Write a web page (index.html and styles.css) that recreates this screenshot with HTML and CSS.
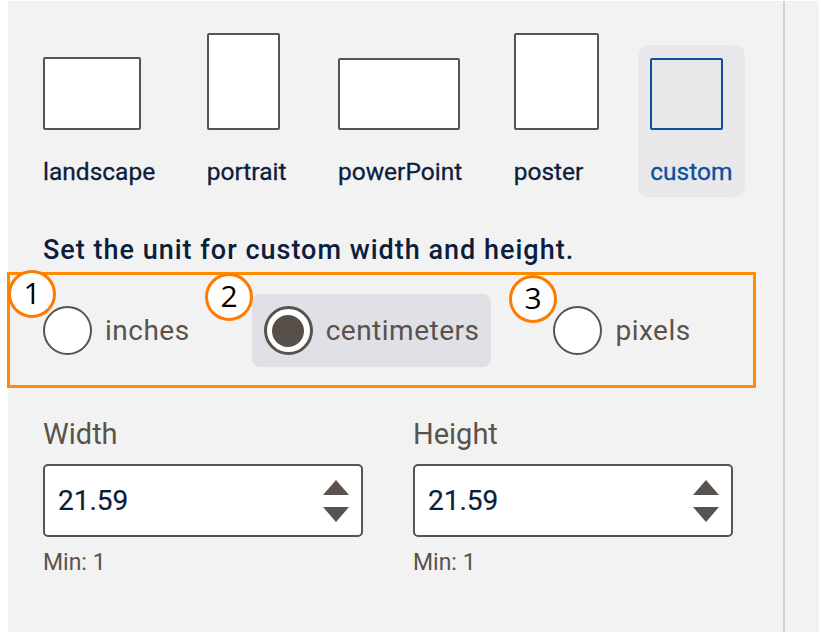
FILE: index.html
```html
<!DOCTYPE html>
<html lang="en">
<head>
<meta charset="utf-8">
<title>Page size</title>
<link rel="stylesheet" href="styles.css">
</head>
<body>
<div class="panel">
  <div class="main">
    <div class="sizes">
      <div class="size">
        <div class="thumb landscape"></div>
        <div class="size-label">landscape</div>
      </div>
      <div class="size">
        <div class="thumb portrait"></div>
        <div class="size-label">portrait</div>
      </div>
      <div class="size">
        <div class="thumb powerpoint"></div>
        <div class="size-label">powerPoint</div>
      </div>
      <div class="size">
        <div class="thumb poster"></div>
        <div class="size-label">poster</div>
      </div>
      <div class="size selected">
        <div class="thumb custom"></div>
        <div class="size-label">custom</div>
      </div>
    </div>

    <div class="heading">Set the unit for custom width and height.</div>

    <div class="units">
      <div class="unit">
        <span class="radio"></span>
        <span class="unit-label">inches</span>
      </div>
      <div class="unit checked">
        <span class="radio"><span class="dot"></span></span>
        <span class="unit-label">centimeters</span>
      </div>
      <div class="unit">
        <span class="radio"></span>
        <span class="unit-label">pixels</span>
      </div>
      <span class="badge b1">1</span>
      <span class="badge b2">2</span>
      <span class="badge b3">3</span>
    </div>

    <div class="fields">
      <div class="field">
        <div class="field-label">Width</div>
        <div class="input">
          <span class="value">21.59</span>
          <svg class="spin" width="26" height="42" viewBox="0 0 26 42">
            <polygon points="13,0 26,15 0,15" fill="#5a524c"/>
            <polygon points="0,27 26,27 13,42" fill="#5a524c"/>
          </svg>
        </div>
        <div class="hint">Min: 1</div>
      </div>
      <div class="field">
        <div class="field-label">Height</div>
        <div class="input">
          <span class="value">21.59</span>
          <svg class="spin" width="26" height="42" viewBox="0 0 26 42">
            <polygon points="13,0 26,15 0,15" fill="#5a524c"/>
            <polygon points="0,27 26,27 13,42" fill="#5a524c"/>
          </svg>
        </div>
        <div class="hint">Min: 1</div>
      </div>
    </div>
  </div>
  <div class="divider"></div>
  <div class="side"></div>
</div>
</body>
</html>
```

FILE: styles.css
```css
html, body {
  margin: 0;
  padding: 0;
  background: #ffffff;
}

body {
  font-family: Roboto, "Liberation Sans", Arial, sans-serif;
}

.panel {
  margin: 1px 0 0 8px;
  width: 811px;
  height: 631px;
  background: #f2f2f2;
  display: flex;
}

.main {
  flex: 1;
  padding: 19px 0 0 35px;
}

.divider {
  width: 2px;
  background: #d5d0cc;
}

.side {
  width: 34px;
}

/* size thumbnails */
.sizes {
  display: flex;
  align-items: flex-end;
  gap: 26.5px;
  margin-left: -12px;
}

.size {
  display: flex;
  flex-direction: column;
  align-items: flex-start;
  padding: 13px 13px 11px 12px;
  border-radius: 10px;
}

.size.selected {
  background: #e8e8ea;
}

.thumb {
  box-sizing: border-box;
  background: #ffffff;
  border: 2px solid #5a524c;
  border-radius: 2px;
}

.landscape { width: 98px; height: 73px; }
.portrait { width: 73px; height: 97px; }
.powerpoint { width: 122px; height: 72px; }
.poster { width: 85px; height: 97px; }
.custom {
  width: 73px;
  height: 72px;
  background: transparent;
  border-color: #0d4ea0;
}

.size-label {
  margin-top: 27px;
  font-size: 24.5px;
  font-weight: 400;
  line-height: 29px;
  color: #0c1e3c;
  -webkit-text-stroke: 0.3px #0c1e3c;
}

.selected .size-label {
  color: #0d4e9f;
  -webkit-text-stroke: 0.3px #0d4e9f;
}

/* heading */
.heading {
  margin-top: 39px;
  font-size: 27px;
  font-weight: 500;
  letter-spacing: 1px;
  line-height: 29px;
  color: #0c1e3c;
}

/* unit radios */
.units {
  position: relative;
  box-sizing: border-box;
  width: 749px;
  margin: 7px 0 0 -36px;
  padding: 19px 21px 18px;
  border: 3px solid #ff8c00;
  display: flex;
  gap: 50px;
}

.unit {
  display: flex;
  align-items: center;
  gap: 13px;
  padding: 12px;
  border-radius: 8px;
}

.unit.checked {
  background: #dfe1e6;
}

.radio {
  box-sizing: border-box;
  width: 49px;
  height: 49px;
  border-radius: 50%;
  border: 2px solid #5a524c;
  background: #ffffff;
  display: flex;
  align-items: center;
  justify-content: center;
}

.checked .radio {
  border-width: 3px;
}

.dot {
  width: 32px;
  height: 32px;
  border-radius: 50%;
  background: #574f49;
}

.unit-label {
  font-size: 28px;
  letter-spacing: 0.5px;
  line-height: 34px;
  color: #5a524c;
}

.badge {
  position: absolute;
  box-sizing: border-box;
  width: 48px;
  height: 48px;
  border-radius: 50%;
  border: 3px solid #ff7a00;
  background: #ffffff;
  color: #000000;
  font-family: "Open Sans", "Liberation Sans", sans-serif;
  font-size: 30px;
  line-height: 40px;
  text-align: center;
}

.b1 { left: -2px; top: -5px; }
.b2 { left: 195px; top: -2px; }
.b3 { left: 499px; top: 0; }

/* fields */
.fields {
  margin-top: 29px;
  display: flex;
  gap: 50px;
}

.field {
  width: 320px;
}

.field-label {
  font-size: 29px;
  line-height: 34px;
  color: #5a524c;
}

.input {
  box-sizing: border-box;
  margin-top: 13px;
  height: 73px;
  background: #ffffff;
  border: 2px solid #5a524c;
  border-radius: 5px;
  display: flex;
  align-items: center;
  justify-content: space-between;
  padding: 0 12px 0 13px;
}

.value {
  font-size: 28px;
  color: #0b1d3d;
  -webkit-text-stroke: 0.2px #0b1d3d;
}

.spin {
  display: block;
}

.hint {
  margin-top: 12px;
  font-size: 23px;
  line-height: 28px;
  color: #5a524c;
}
```
